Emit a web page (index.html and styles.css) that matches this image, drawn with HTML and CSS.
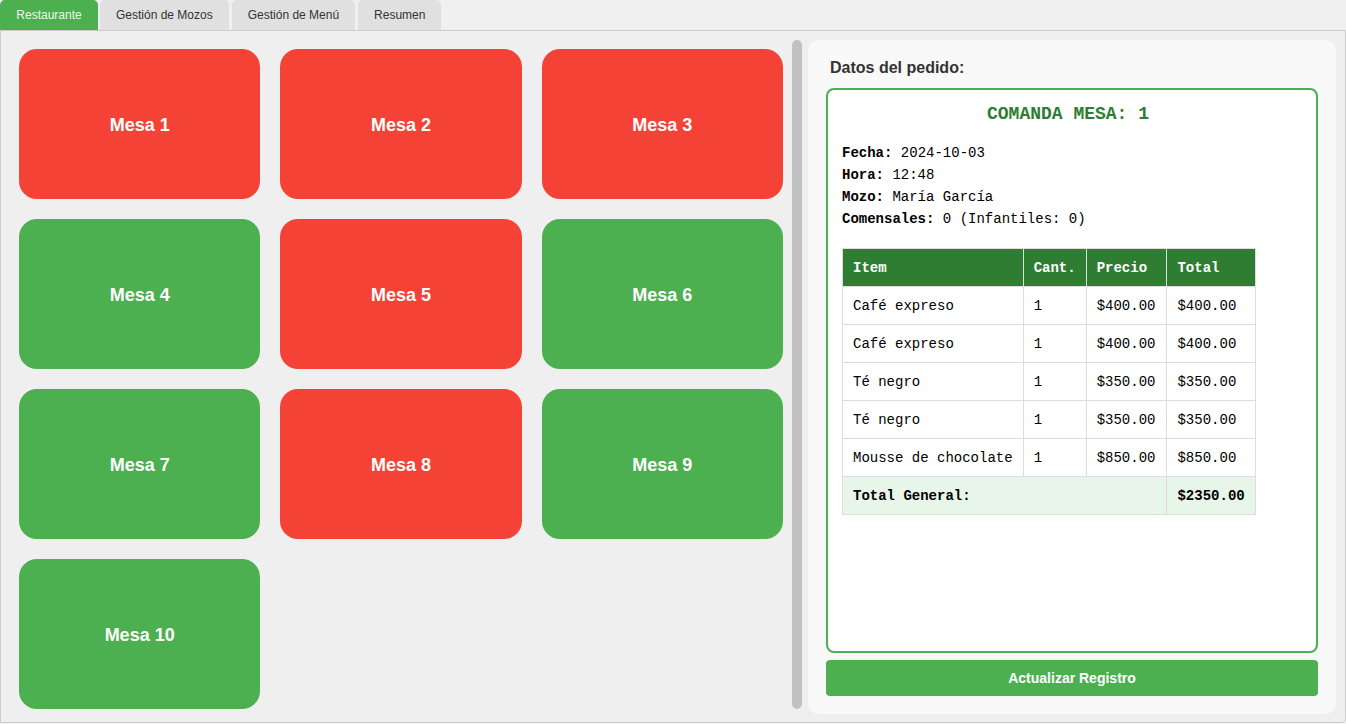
FILE: index.html
```html
<!DOCTYPE html>
<html lang="es">
<head>
<meta charset="utf-8">
<title>Restaurante</title>
<link rel="stylesheet" href="styles.css">
</head>
<body>
<div class="tabs">
  <div class="tab active">Restaurante</div>
  <div class="tab">Gestión de Mozos</div>
  <div class="tab">Gestión de Menú</div>
  <div class="tab">Resumen</div>
</div>
<div class="frame">
  <div class="tables-area">
    <div class="grid">
      <div class="mesa busy">Mesa 1</div>
      <div class="mesa busy">Mesa 2</div>
      <div class="mesa busy">Mesa 3</div>
      <div class="mesa free">Mesa 4</div>
      <div class="mesa busy">Mesa 5</div>
      <div class="mesa free">Mesa 6</div>
      <div class="mesa free">Mesa 7</div>
      <div class="mesa busy">Mesa 8</div>
      <div class="mesa free">Mesa 9</div>
      <div class="mesa free">Mesa 10</div>
    </div>
  </div>
  <div class="scrollbar"><div class="thumb"></div></div>
  <div class="panel">
    <h3 class="panel-title">Datos del pedido:</h3>
    <div class="comanda">
      <h2 class="comanda-title">COMANDA MESA: 1</h2>
      <div class="info">
        <div><b>Fecha:</b> 2024-10-03</div>
        <div><b>Hora:</b> 12:48</div>
        <div><b>Mozo:</b> María García</div>
        <div><b>Comensales:</b> 0 (Infantiles: 0)</div>
      </div>
      <table class="items">
        <thead>
          <tr><th>Item</th><th>Cant.</th><th class="num">Precio</th><th>Total</th></tr>
        </thead>
        <tbody>
          <tr><td>Café expreso</td><td>1</td><td class="num">$400.00</td><td>$400.00</td></tr>
          <tr><td>Café expreso</td><td>1</td><td class="num">$400.00</td><td>$400.00</td></tr>
          <tr><td>Té negro</td><td>1</td><td class="num">$350.00</td><td>$350.00</td></tr>
          <tr><td>Té negro</td><td>1</td><td class="num">$350.00</td><td>$350.00</td></tr>
          <tr><td>Mousse de chocolate</td><td>1</td><td class="num">$850.00</td><td>$850.00</td></tr>
          <tr class="total"><td colspan="3">Total General:</td><td>$2350.00</td></tr>
        </tbody>
      </table>
    </div>
    <button class="btn">Actualizar Registro</button>
  </div>
</div>
</body>
</html>
```
FILE: styles.css
```css
* { box-sizing: border-box; }
html, body { margin: 0; padding: 0; }
body {
  background: #f0f0f0;
  font-family: "Liberation Sans", Arial, sans-serif;
  width: 1346px;
  height: 724px;
  overflow: hidden;
}
.tabs {
  display: flex;
  gap: 3px;
  height: 30px;
}
.tab {
  height: 30px;
  line-height: 30px;
  padding: 0 16px;
  font-size: 12px;
  color: #333;
  background: #e0e0e0;
  border-radius: 5px 5px 0 0;
}
.tab.active {
  background: #4caf50;
  color: #eef8ee;
  width: 98px;
  padding: 0;
  text-align: center;
  margin-right: -1px;
}
.frame {
  display: flex;
  height: 693px;
  border: 1px solid #cccccc;
  border-radius: 0 0 4px 0;
  background: #efefef;
  padding: 9px 9px 8px 0;
}
.tables-area {
  width: 782px;
  padding: 9px 0 0 18px;
}
.grid {
  display: grid;
  grid-template-columns: repeat(3, 1fr);
  grid-auto-rows: 150px;
  column-gap: 20px;
  row-gap: 20px;
}
.mesa {
  display: flex;
  align-items: center;
  justify-content: center;
  border-radius: 18px;
  color: #ffffff;
  font-weight: bold;
  font-size: 18px;
  padding-top: 2px;
}
.mesa.busy { background: #f44336; }
.mesa.free { background: #4caf50; }
.scrollbar {
  width: 10px;
  margin-left: 9px;
  margin-right: 6px;
  display: flex;
  flex-direction: column;
}
.thumb {
  height: 669px;
  background: #c1c1c1;
  border-radius: 5px;
}
.panel {
  flex: 1;
  background: #f9f9f9;
  border-radius: 10px;
  padding: 18px;
  display: flex;
  flex-direction: column;
}
.panel-title {
  margin: 0 0 10px 4px;
  font-size: 16px;
  line-height: 20px;
  color: #333;
  font-weight: bold;
}
.comanda {
  flex: 1;
  background: #fff;
  border: 2px solid #4caf50;
  border-radius: 8px;
  padding: 13px 14px;
  font-family: "Liberation Mono", "Courier New", monospace;
  color: #000;
}
.comanda-title {
  margin: 0 0 17px;
  padding-right: 8px;
  text-align: center;
  font-size: 18px;
  line-height: 22px;
  color: #2e7d32;
  font-weight: bold;
}
.info {
  font-size: 14px;
  line-height: 22px;
  margin-bottom: 18px;
}
.items {
  border-collapse: collapse;
  font-size: 14px;
  line-height: 17px;
}
.items th, .items td {
  border: 1px solid #dddddd;
  padding: 11px 10px 9px;
  text-align: left;
  white-space: nowrap;
}
.items .num {
  padding-right: 11px;
}
.items th {
  background: #2e7d32;
  color: #fff;
  font-weight: bold;
}
.items tr.total td {
  background: #e8f5e9;
  font-weight: bold;
}
.btn {
  margin-top: 7px;
  height: 36px;
  border: none;
  border-radius: 4px;
  background: #4caf50;
  color: #fff;
  font-family: "Liberation Sans", Arial, sans-serif;
  font-weight: bold;
  font-size: 14px;
}
```
